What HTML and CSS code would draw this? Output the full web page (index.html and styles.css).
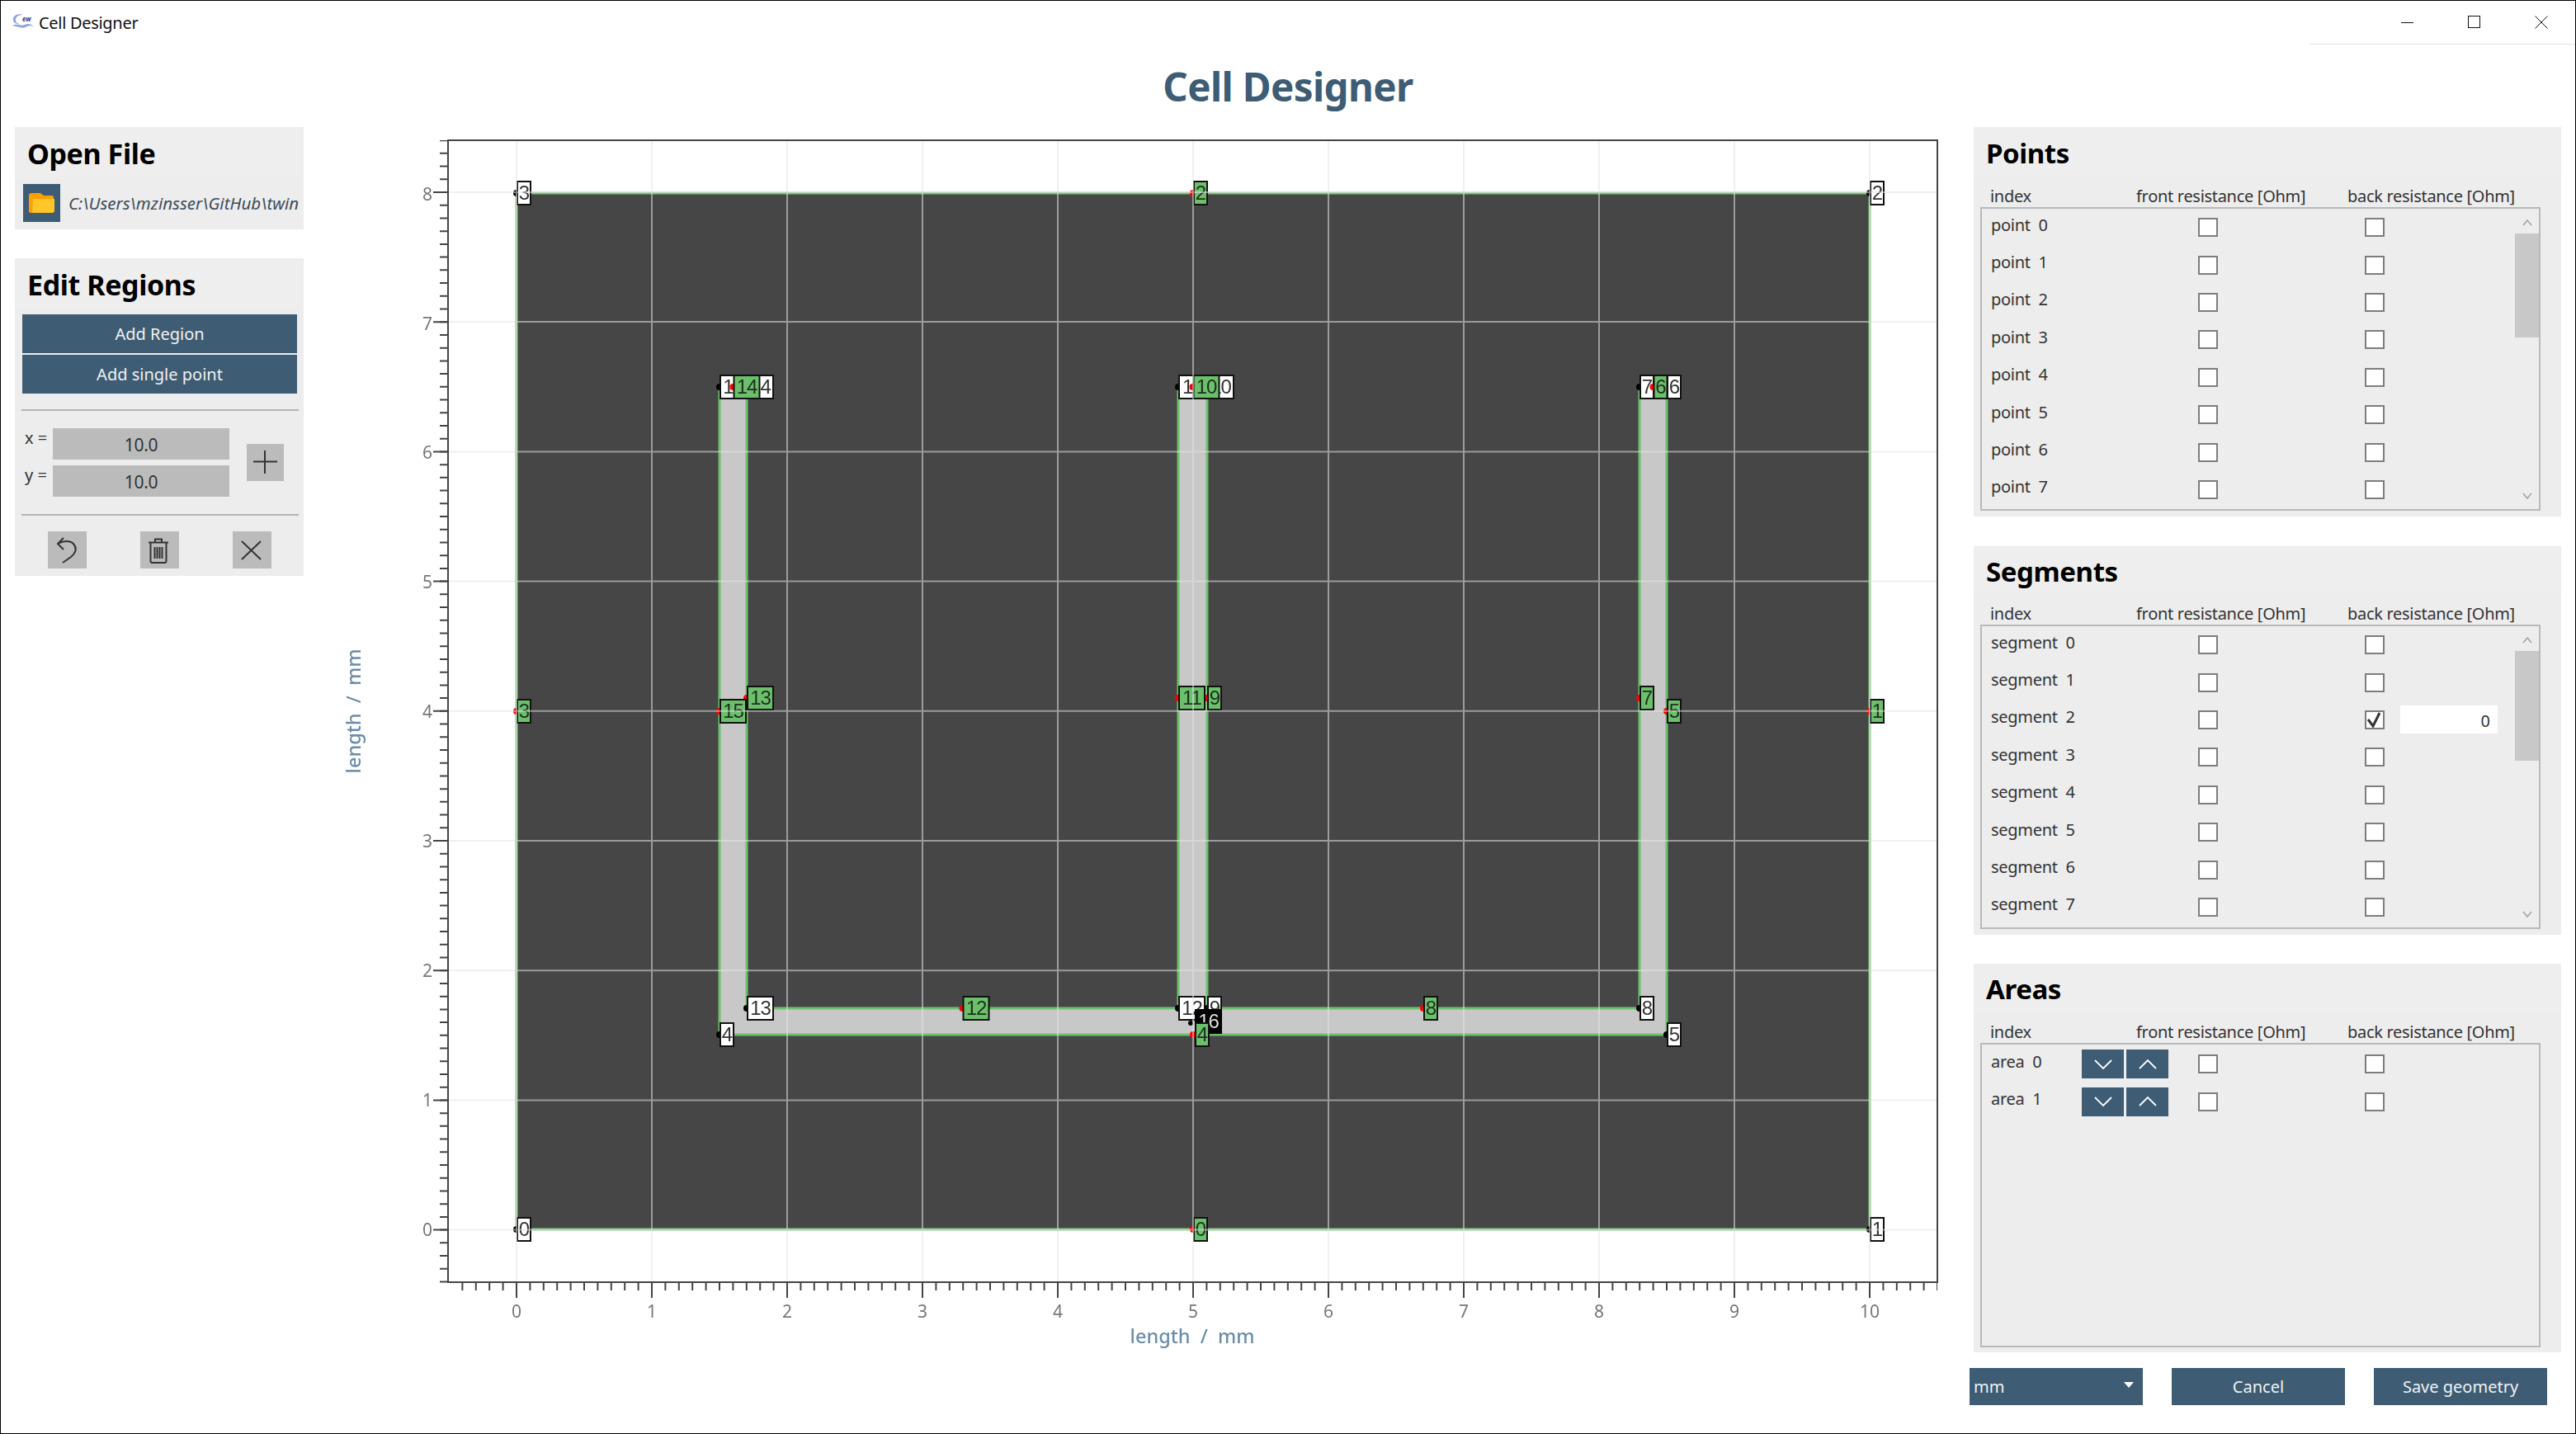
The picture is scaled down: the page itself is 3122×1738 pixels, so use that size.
FILE: index.html
```html
<!DOCTYPE html>
<html lang="en">
<head>
<meta charset="utf-8">
<title>Cell Designer</title>
<link rel="stylesheet" href="styles.css">
</head>
<body>
<div class="window">
  <header class="titlebar">
    <svg class="app-icon" width="28" height="20" viewBox="0 0 28 20">
      <path d="M11 1C4 1 1 5 2 9c1 3 5 5 9 4-4 0-6-2-6-5s3-6 8-6z" fill="#8fa4dc"/>
      <path d="M1 15c6-3 10 1 15-1 4-2 7-1 11 2-4-1-7-1-10 1-5 2-10-1-16-2z" fill="#8fa4dc"/>
      <text class="app-icon-text" x="13" y="10">ew</text>
    </svg>
    <span class="app-name">Cell Designer</span>
    <div class="win-controls">
      <svg class="win-btn" width="16" height="16" viewBox="0 0 16 16"><path d="M0 8.500h15" stroke="#111" fill="none"/></svg>
      <svg class="win-btn" width="16" height="16" viewBox="0 0 16 16"><rect x=".5" y=".5" width="14" height="14" stroke="#111" fill="none"/></svg>
      <svg class="win-btn" width="16" height="16" viewBox="0 0 16 16"><path d="M.5.5l15 15M15.500 .5l-15 15" stroke="#111" fill="none"/></svg>
    </div>
  </header>
  <h1 class="app-title">Cell Designer</h1>
  <div class="content">
    <aside class="left-col">
      <section class="panel open-file">
        <h2 class="panel-title">Open File</h2>
        <div class="file-row">
          <button class="folder-btn">
            <svg width="45" height="46" viewBox="0 0 45 46">
              <path d="M7 14q0-3 3-3h11l4 3h10q2 0 2 2v3H13l-2 16H9q-2 0-2-2z" fill="#ff9f00"/>
              <path d="M12 18h26v14q0 3-3 3H11z" fill="#ffc629"/>
            </svg>
          </button>
          <span class="file-path">C:\Users\mzinsser\GitHub\twin</span>
        </div>
      </section>
      <section class="panel edit-regions">
        <h2 class="panel-title">Edit Regions</h2>
        <div class="edit-buttons">
          <button class="btn wide">Add Region</button>
          <button class="btn wide">Add single point</button>
        </div>
        <hr class="divider">
        <div class="coords">
          <div class="coord-fields">
            <label class="coord"><span class="coord-label">x =</span><span class="coord-input">10.0</span></label>
            <label class="coord"><span class="coord-label">y =</span><span class="coord-input">10.0</span></label>
          </div>
          <button class="grey-btn plus">
            <svg width="45" height="45" viewBox="0 0 45 45"><path d="M8 21.500h29M22 8v28" stroke="#333" stroke-width="2" fill="none"/></svg>
          </button>
        </div>
        <hr class="divider lower">
        <div class="tools">
          <button class="grey-btn tool">
            <svg width="47" height="45" viewBox="0 0 47 45"><path d="M19 8l-7 7 7 7M12 15c7-4 15-4 19 0 5 6 3 11-3 16l-10 7" stroke="#333" stroke-width="2" fill="none"/></svg>
          </button>
          <button class="grey-btn tool">
            <svg width="47" height="45" viewBox="0 0 47 45"><path d="M10 13.500h24M18 13V9.500h8V13M12.500 14v22q0 2 2 2h15q2 0 2-2V14M17.500 19v14M20.500 19v14M23.500 19v14M26.500 19v14" stroke="#333" stroke-width="2" fill="none"/></svg>
          </button>
          <button class="grey-btn tool">
            <svg width="47" height="45" viewBox="0 0 47 45"><path d="M11 12l23 22M34 12L11 34" stroke="#333" stroke-width="2" fill="none"/></svg>
          </button>
        </div>
      </section>
    </aside>

    <svg class="plot" width="1960" height="1490" viewBox="400 160 1960 1490">
      <rect class="axes-bg" x="543" y="170" width="1805" height="1384"/>
      <rect class="cell-area" x="626" y="234" width="1640" height="1256"/>
      <path class="channel" d="M872 469H905V1222H1428V469H1463V1222H1987V469H2020V1254H872Z"/>

      <g class="points">
        <circle cx="626" cy="1490" r="4"/><rect x="627" y="1476" width="16" height="28"/><text x="635" y="1498">0</text>
        <circle cx="2266" cy="1490" r="4"/><rect x="2267" y="1476" width="16" height="28"/><text x="2275" y="1498">1</text>
        <circle cx="2266" cy="234" r="4"/><rect x="2267" y="220" width="16" height="28"/><text x="2275" y="242">2</text>
        <circle cx="626" cy="234" r="4"/><rect x="627" y="220" width="16" height="28"/><text x="635" y="242">3</text>
        <circle cx="872" cy="1254" r="4"/><rect x="873" y="1240" width="16" height="28"/><text x="881" y="1262">4</text>
        <circle cx="2020" cy="1254" r="4"/><rect x="2021" y="1240" width="16" height="28"/><text x="2029" y="1262">5</text>
        <circle cx="2020" cy="469" r="4"/><rect x="2021" y="455" width="16" height="28"/><text x="2029" y="477">6</text>
        <circle cx="1987" cy="469" r="4"/><rect x="1988" y="455" width="16" height="28"/><text x="1996" y="477">7</text>
        <circle cx="1987" cy="1222" r="4"/><rect x="1988" y="1208" width="16" height="28"/><text x="1996" y="1230">8</text>
        <circle cx="1463" cy="1222" r="4"/><rect x="1464" y="1208" width="16" height="28"/><text x="1472" y="1230">9</text>
        <circle cx="1463" cy="469" r="4"/><rect x="1464" y="455" width="31" height="28"/><text x="1479.500" y="477">10</text>
        <circle cx="1428" cy="469" r="4"/><rect x="1429" y="455" width="31" height="28"/><text x="1444.500" y="477">11</text>
        <circle cx="1428" cy="1222" r="4"/><rect x="1429" y="1208" width="31" height="28"/><text x="1444.500" y="1230">12</text>
        <circle cx="905" cy="1222" r="4"/><rect x="906" y="1208" width="31" height="28"/><text x="921.500" y="1230">13</text>
        <circle cx="905" cy="469" r="4"/><rect x="906" y="455" width="31" height="28"/><text x="921.500" y="477">14</text>
        <circle cx="872" cy="469" r="4"/><rect x="873" y="455" width="31" height="28"/><text x="888.500" y="477">15</text>
      </g>

      <g class="areas">
        <circle cx="1443" cy="1240" r="3"/><rect x="1449" y="1224" width="31" height="28"/><text x="1464.500" y="1246">16</text>
      </g>

      <g class="segments">
        <circle cx="1446" cy="1490" r="4"/><rect x="1447" y="1476" width="16" height="28"/><text x="1455" y="1498">0</text>
        <circle cx="2266" cy="862" r="4"/><rect x="2267" y="848" width="16" height="28"/><text x="2275" y="870">1</text>
        <circle cx="1446" cy="234" r="4"/><rect x="1447" y="220" width="16" height="28"/><text x="1455" y="242">2</text>
        <circle cx="626" cy="862" r="4"/><rect x="627" y="848" width="16" height="28"/><text x="635" y="870">3</text>
        <circle cx="1446" cy="1254" r="4"/><rect x="1449" y="1240" width="16" height="28"/><text x="1457" y="1262">4</text>
        <circle cx="2020" cy="862" r="4"/><rect x="2021" y="848" width="16" height="28"/><text x="2029" y="870">5</text>
        <circle cx="2003.500" cy="469" r="4"/><rect x="2004.500" y="455" width="16" height="28"/><text x="2012.500" y="477">6</text>
        <circle cx="1987" cy="846" r="4"/><rect x="1988" y="832" width="16" height="28"/><text x="1996" y="854">7</text>
        <circle cx="1725" cy="1222" r="4"/><rect x="1726" y="1208" width="16" height="28"/><text x="1734" y="1230">8</text>
        <circle cx="1463" cy="846" r="4"/><rect x="1464" y="832" width="16" height="28"/><text x="1472" y="854">9</text>
        <circle cx="1445.500" cy="469" r="4"/><rect x="1446.500" y="455" width="31" height="28"/><text x="1462" y="477">10</text>
        <circle cx="1428" cy="846" r="4"/><rect x="1429" y="832" width="31" height="28"/><text x="1444.500" y="854">11</text>
        <circle cx="1166.500" cy="1222" r="4"/><rect x="1167.500" y="1208" width="31" height="28"/><text x="1183" y="1230">12</text>
        <circle cx="905" cy="846" r="4"/><rect x="906" y="832" width="31" height="28"/><text x="921.500" y="854">13</text>
        <circle cx="888.500" cy="469" r="4"/><rect x="889.500" y="455" width="31" height="28"/><text x="905" y="477">14</text>
        <circle cx="872" cy="862" r="4"/><rect x="873" y="848" width="31" height="28"/><text x="888.500" y="870">15</text>
      </g>

      <path class="grid" d="M626 170V1554M790 170V1554M954 170V1554M1118 170V1554M1282 170V1554M1446 170V1554M1610 170V1554M1774 170V1554M1938 170V1554M2102 170V1554M2266 170V1554M543 233H2348M543 390H2348M543 547.400H2348M543 704.600H2348M543 861.800H2348M543 1019H2348M543 1176.200H2348M543 1333.400H2348M543 1490.600H2348"/>

      <rect class="axes-frame" x="543" y="170" width="1805" height="1384"/>
      <line class="minor" x1="538" x2="538" y1="1554.500" y2="170" stroke-dasharray="2 13.720"/>
      <line class="minor" x1="559.400" x2="2348" y1="1559" y2="1559" stroke-dasharray="2 14.400"/>
      <path class="major" d="M525 233H543M525 390.200H543M525 547.400H543M525 704.600H543M525 861.800H543M525 1019H543M525 1176.200H543M525 1333.400H543M525 1490.600H543M626 1554V1573M790 1554V1573M954 1554V1573M1118 1554V1573M1282 1554V1573M1446 1554V1573M1610 1554V1573M1774 1554V1573M1938 1554V1573M2102 1554V1573M2266 1554V1573"/>

      <g class="y-ticks">
        <text x="524" y="243">8</text><text x="524" y="400">7</text><text x="524" y="556">6</text><text x="524" y="713">5</text><text x="524" y="870">4</text><text x="524" y="1027">3</text><text x="524" y="1184">2</text><text x="524" y="1341">1</text><text x="524" y="1498">0</text>
      </g>
      <g class="x-ticks">
        <text x="626" y="1597">0</text><text x="790" y="1597">1</text><text x="954" y="1597">2</text><text x="1118" y="1597">3</text><text x="1282" y="1597">4</text><text x="1446" y="1597">5</text><text x="1610" y="1597">6</text><text x="1774" y="1597">7</text><text x="1938" y="1597">8</text><text x="2102" y="1597">9</text><text x="2266" y="1597">10</text>
      </g>
      <text class="axis-title" x="1445" y="1628">length  /  mm</text>
      <text class="axis-title" x="437" y="862" transform="rotate(-90 437 862)">length  /  mm</text>
    </svg>

    <aside class="right-col">
      <section class="panel table-panel points-panel">
        <h2 class="panel-title">Points</h2>
        <div class="table-head"><span class="th-index">index</span><span class="th-front">front resistance [Ohm]</span><span class="th-back">back resistance [Ohm]</span></div>
        <div class="table-box">
          <div class="rows">
            <div class="row"><span class="row-name">point&nbsp; 0</span><span class="check"></span><span class="check"></span></div>
            <div class="row"><span class="row-name">point&nbsp; 1</span><span class="check"></span><span class="check"></span></div>
            <div class="row"><span class="row-name">point&nbsp; 2</span><span class="check"></span><span class="check"></span></div>
            <div class="row"><span class="row-name">point&nbsp; 3</span><span class="check"></span><span class="check"></span></div>
            <div class="row"><span class="row-name">point&nbsp; 4</span><span class="check"></span><span class="check"></span></div>
            <div class="row"><span class="row-name">point&nbsp; 5</span><span class="check"></span><span class="check"></span></div>
            <div class="row"><span class="row-name">point&nbsp; 6</span><span class="check"></span><span class="check"></span></div>
            <div class="row"><span class="row-name">point&nbsp; 7</span><span class="check"></span><span class="check"></span></div>
          </div>
          <div class="scrollbar">
            <svg class="scroll-arrow up" width="12" height="8" viewBox="0 0 12 8"><path d="M1 7l5-6 5 6" stroke="#a0a0a0" stroke-width="1.500" fill="none"/></svg>
            <div class="thumb"></div>
            <svg class="scroll-arrow down" width="12" height="8" viewBox="0 0 12 8"><path d="M1 1l5 6 5-6" stroke="#a0a0a0" stroke-width="1.500" fill="none"/></svg>
          </div>
        </div>
      </section>

      <section class="panel table-panel segments-panel">
        <h2 class="panel-title">Segments</h2>
        <div class="table-head"><span class="th-index">index</span><span class="th-front">front resistance [Ohm]</span><span class="th-back">back resistance [Ohm]</span></div>
        <div class="table-box">
          <div class="rows">
            <div class="row"><span class="row-name">segment&nbsp; 0</span><span class="check"></span><span class="check"></span></div>
            <div class="row"><span class="row-name">segment&nbsp; 1</span><span class="check"></span><span class="check"></span></div>
            <div class="row"><span class="row-name">segment&nbsp; 2</span><span class="check"></span><span class="check">
              <svg width="20" height="19" viewBox="0 0 20 19"><path d="M2 9l6 8L16 1" stroke="#333" stroke-width="3" fill="none"/></svg>
            </span><span class="res-input">0</span></div>
            <div class="row"><span class="row-name">segment&nbsp; 3</span><span class="check"></span><span class="check"></span></div>
            <div class="row"><span class="row-name">segment&nbsp; 4</span><span class="check"></span><span class="check"></span></div>
            <div class="row"><span class="row-name">segment&nbsp; 5</span><span class="check"></span><span class="check"></span></div>
            <div class="row"><span class="row-name">segment&nbsp; 6</span><span class="check"></span><span class="check"></span></div>
            <div class="row"><span class="row-name">segment&nbsp; 7</span><span class="check"></span><span class="check"></span></div>
          </div>
          <div class="scrollbar">
            <svg class="scroll-arrow up" width="12" height="8" viewBox="0 0 12 8"><path d="M1 7l5-6 5 6" stroke="#a0a0a0" stroke-width="1.500" fill="none"/></svg>
            <div class="thumb long"></div>
            <svg class="scroll-arrow down" width="12" height="8" viewBox="0 0 12 8"><path d="M1 1l5 6 5-6" stroke="#a0a0a0" stroke-width="1.500" fill="none"/></svg>
          </div>
        </div>
      </section>

      <section class="panel table-panel areas-panel">
        <h2 class="panel-title">Areas</h2>
        <div class="table-head"><span class="th-index">index</span><span class="th-front">front resistance [Ohm]</span><span class="th-back">back resistance [Ohm]</span></div>
        <div class="table-box">
          <div class="rows">
            <div class="row">
              <div class="area-cell"><span class="row-name area-name">area&nbsp; 0</span>
                <button class="arrow-btn"><svg width="24" height="14" viewBox="0 0 24 14"><path d="M2 2l10 10L22 2" stroke="#fff" stroke-width="1.800" fill="none"/></svg></button>
                <button class="arrow-btn"><svg width="24" height="14" viewBox="0 0 24 14"><path d="M2 12L12 2l10 10" stroke="#fff" stroke-width="1.800" fill="none"/></svg></button>
              </div>
              <span class="check"></span><span class="check"></span>
            </div>
            <div class="row">
              <div class="area-cell"><span class="row-name area-name">area&nbsp; 1</span>
                <button class="arrow-btn"><svg width="24" height="14" viewBox="0 0 24 14"><path d="M2 2l10 10L22 2" stroke="#fff" stroke-width="1.800" fill="none"/></svg></button>
                <button class="arrow-btn"><svg width="24" height="14" viewBox="0 0 24 14"><path d="M2 12L12 2l10 10" stroke="#fff" stroke-width="1.800" fill="none"/></svg></button>
              </div>
              <span class="check"></span><span class="check"></span>
            </div>
          </div>
        </div>
      </section>

      <div class="footer-row">
        <div class="unit-select"><span>mm</span><span class="caret"></span></div>
        <button class="btn footer-btn">Cancel</button>
        <button class="btn footer-btn">Save geometry</button>
      </div>
    </aside>
  </div>
</div>
</body>
</html>
```

FILE: styles.css
```css
* { box-sizing: border-box; }
html, body { margin: 0; padding: 0; }
body {
  width: 3122px;
  height: 1738px;
  background: #fff;
  color: #333;
  font-family: "Noto Sans", "Open Sans", sans-serif;
  font-size: 20px;
  overflow: hidden;
}
button { font-family: inherit; border: 0; padding: 0; margin: 0; display: block; }
.window { width: 3122px; height: 1738px; border: 1px solid #000; }

.titlebar { display: flex; align-items: center; height: 53px; padding-left: 13px; position: relative; }
.app-icon { margin-right: 5px; margin-top: -4px; }
.app-icon-text { font: italic bold 8px "Noto Sans", sans-serif; fill: #2a3f8f; }
.app-name { color: #111; font-size: 20px; letter-spacing: -.3px; }
.win-controls { margin-left: auto; align-self: stretch; width: 322px; display: flex; align-items: center; justify-content: flex-end; gap: 65px; padding-right: 33px; border-bottom: 1px solid #e4e4e4; }
.win-btn { display: block; margin-bottom: 1px; }

.app-title { margin: 0; height: 100px; line-height: 102px; text-align: center; color: #3e5c73; font-size: 47.500px; font-weight: 700; letter-spacing: -.6px; }

.content { display: flex; align-items: flex-start; }
.left-col { margin-left: 17px; width: 350px; }
.left-col .panel-title { font-size: 34px; }
.plot { margin-left: 32px; margin-top: 6px; flex: none; display: block; filter: blur(.5px); }
.right-col { margin-left: 27px; width: 717px; flex: none; }

.panel { background: #ededed; }
.panel-title { margin: 0; background: #eee; color: #000; height: 59px; line-height: 64px; font-size: 33px; font-weight: 700; letter-spacing: -.4px; }

.open-file { height: 124px; }
.open-file .panel-title { height: 60px; padding-left: 15px; }
.file-row { display: flex; align-items: center; padding: 9px 0 0 10px; }
.folder-btn { width: 45px; height: 46px; background: #3e5c73; flex: none; }
.folder-btn svg { display: block; }
.file-path { margin-left: 10px; width: 279px; overflow: hidden; white-space: nowrap; font-style: italic; color: #3c4c5a; font-size: 20.500px; }

.edit-regions { margin-top: 35px; height: 385px; }
.edit-regions .panel-title { height: 59px; padding-left: 15px; }
.edit-buttons { padding: 9px 8px 0 9px; display: flex; flex-direction: column; gap: 2px; }
.btn { background: #3e5c73; color: #f2f2f2; font-size: 20px; }
.wide { width: 333px; height: 47px; }
.divider { border: 0; height: 2px; background: #b4b4b4; margin: 19px 6px 0 8px; }
.divider.lower { margin-top: 21px; }
.coords { display: flex; align-items: center; padding: 21px 0 0 12px; }
.coord-fields { display: flex; flex-direction: column; gap: 7px; }
.coord { display: flex; align-items: flex-start; }
.coord-label { width: 34px; font-size: 20px; line-height: 24px; color: #333; }
.coord-input { width: 214px; height: 38px; background: #bbb; text-align: center; line-height: 40px; font-size: 21px; letter-spacing: -.3px; color: #333; }
.grey-btn { background: #bbb; flex: none; }
.grey-btn svg { display: block; }
.plus { width: 45px; height: 45px; margin-left: 21px; }
.tools { display: flex; gap: 65px; padding: 19px 0 0 40px; }
.tool { width: 47px; height: 45px; }

.axes-bg { fill: #fff; }
.cell-area { fill: #464646; stroke: #7cc67c; stroke-width: 3; }
.channel { fill: #c8c8c8; stroke: #6dc06d; stroke-width: 3; }
.points circle, .areas circle { fill: #000; }
.segments circle { fill: #f00; }
.points rect { fill: #fff; stroke: #111; stroke-width: 2; }
.areas rect { fill: #000; stroke: #000; stroke-width: 2; }
.segments rect { fill: #6cc06c; stroke: #111; stroke-width: 2; }
.points text, .areas text, .segments text { font: 24px "Liberation Sans", sans-serif; letter-spacing: -1px; text-anchor: middle; fill: #333; }
.segments text { fill: #1e2e1e; }
.areas text { fill: #ddd; }
.grid { stroke: rgba(228, 228, 228, .55); stroke-width: 2; fill: none; }
.axes-frame { fill: none; stroke: #444; stroke-width: 2; }
.minor { stroke: #444; stroke-width: 10; fill: none; }
.major { stroke: #444; stroke-width: 2; fill: none; }
.y-ticks text, .x-ticks text { font: 21px "Noto Sans", sans-serif; fill: #777; }
.y-ticks text { text-anchor: end; }
.x-ticks text { text-anchor: middle; }
.axis-title { font: 500 23.500px "Noto Sans", sans-serif; fill: #6b8da6; text-anchor: middle; white-space: pre; }

.table-panel { margin-left: 5px; width: 712px; display: flex; flex-direction: column; }
.points-panel { height: 472px; margin-bottom: 36px; padding-bottom: 7px; }
.segments-panel { height: 471px; margin-bottom: 35px; padding-bottom: 7px; }
.segments-panel .panel-title { height: 57px; line-height: 62px; }
.areas-panel { height: 471px; padding-bottom: 6px; }
.areas-panel .panel-title { height: 58px; line-height: 62px; }
.areas-panel .rows { padding-top: 1px; }
.table-panel .panel-title { padding-left: 15px; flex: none; }
.table-head { height: 38px; flex: none; display: flex; line-height: 50px; color: #333; font-size: 20px; letter-spacing: -.3px; }
.th-index { margin-left: 20px; width: 177px; }
.th-front { width: 256px; }
.table-box { margin-left: 8px; width: 679px; flex: 1; border: 2px solid #b6babd; display: flex; min-height: 0; }
.rows { flex: 1; }
.row { height: 45.400px; display: grid; grid-template-columns: 262px 202px 43px 118px; align-items: center; }
.row-name { padding-left: 11px; margin-bottom: 7px; font-size: 20px; letter-spacing: -.3px; color: #333; }
.check { width: 24px; height: 23px; background: #fff; border: 2px solid #7d7d7d; display: flex; align-items: center; justify-content: center; }
.check svg { display: block; }
.row .res-input { grid-column: 4; height: 34px; background: #fff; text-align: right; padding-right: 9px; line-height: 37px; font-size: 20px; }
.scrollbar { width: 29px; flex: none; display: flex; flex-direction: column; align-items: center; }
.scroll-arrow { flex: none; }
.scroll-arrow.up { margin: 13px 0 9px; }
.scroll-arrow.down { margin: auto 0 12px; }
.thumb { width: 29px; height: 126px; background: #c8c8c8; flex: none; }
.thumb.long { height: 133px; }
.area-cell { display: flex; align-items: center; height: 100%; }
.area-name { width: 121px; }
.arrow-btn { width: 51px; height: 35px; background: #3e5c73; margin-right: 3px; display: flex; align-items: center; justify-content: center; flex: none; }
.arrow-btn svg { display: block; }

.footer-row { margin-top: 19px; display: flex; gap: 35px; }
.unit-select { width: 210px; height: 45px; background: #3e5c73; color: #f2f2f2; display: flex; align-items: center; justify-content: space-between; padding: 0 11px 0 5px; font-size: 20px; }
.caret { width: 0; height: 0; border-left: 6px solid transparent; border-right: 6px solid transparent; border-top: 7px solid #fff; margin-bottom: 4px; }
.footer-btn { width: 210px; height: 45px; }
```
